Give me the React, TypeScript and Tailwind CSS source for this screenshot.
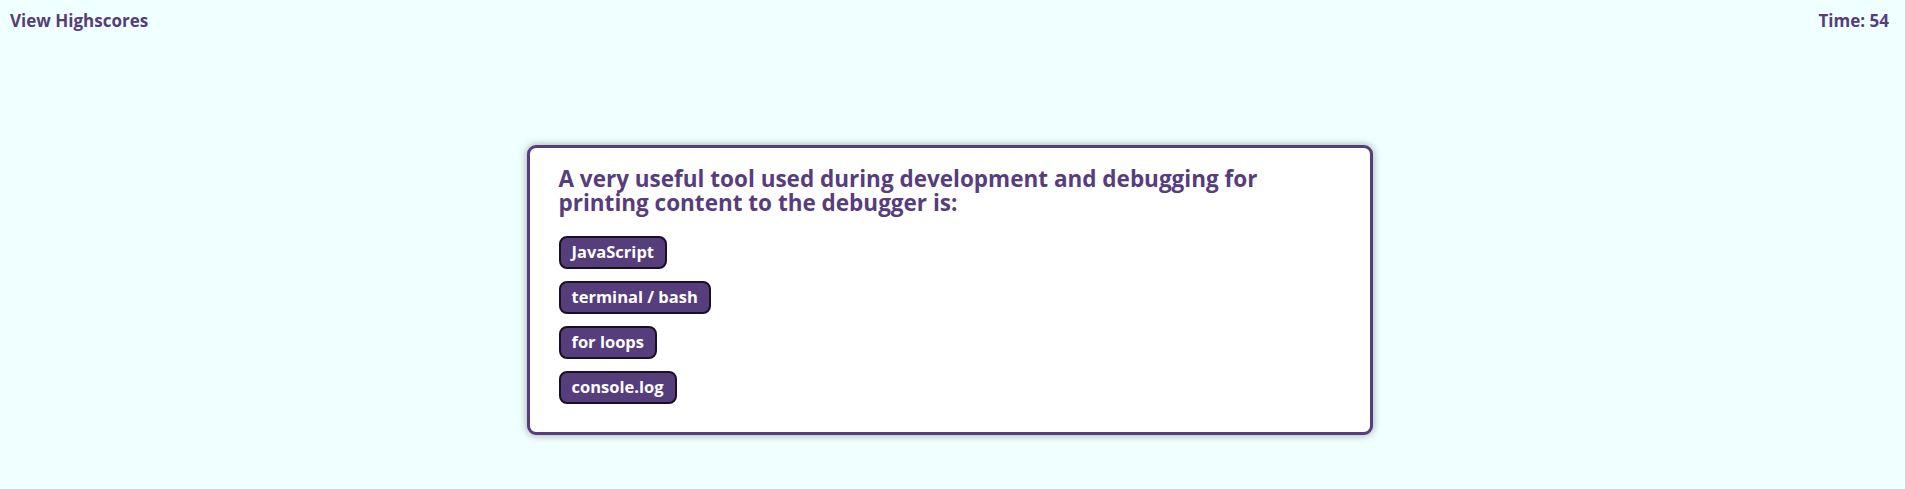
import React, { useState } from "react";

const question = {
  title: "A very useful tool used during development and debugging for printing content to the debugger is:",
  choices: ["JavaScript", "terminal / bash", "for loops", "console.log"],
};

export default function App() {
  const [time] = useState(54);

  return (
    <div className="min-h-screen w-full bg-[#f0ffff] text-[#563d7c] font-['Trebuchet_MS','Open_Sans',sans-serif]">
      {/* 상단 바 */}
      <header className="flex justify-between items-center pl-[10px] pr-[16px] pt-[10px] font-bold text-[17px] leading-[22px]">
        <a className="cursor-pointer">View Highscores</a>
        <span>Time: {time}</span>
      </header>

      <main className="flex justify-center pt-[113px] pr-[6px]">
        <div className="w-[846px] bg-white border-[3px] border-[#563d7c] rounded-[9px] shadow-[0_0_8px_rgba(0,0,0,0.35)] pl-[29px] pr-[29px] pt-[19px] pb-[28px]">
          <h2 className="font-bold text-[22.5px] leading-[23.5px] pr-[50px]">{question.title}</h2>
          <div className="flex flex-col items-start gap-[12px] mt-[22px]">
            {question.choices.map((c) => (
              <button
                key={c}
                className="h-[33px] px-[11px] bg-[#563d7c] text-white border-2 border-[#1a1024] rounded-[8px] font-bold text-[16.5px] leading-none cursor-pointer"
              >
                {c}
              </button>
            ))}
          </div>
        </div>
      </main>
    </div>
  );
}
